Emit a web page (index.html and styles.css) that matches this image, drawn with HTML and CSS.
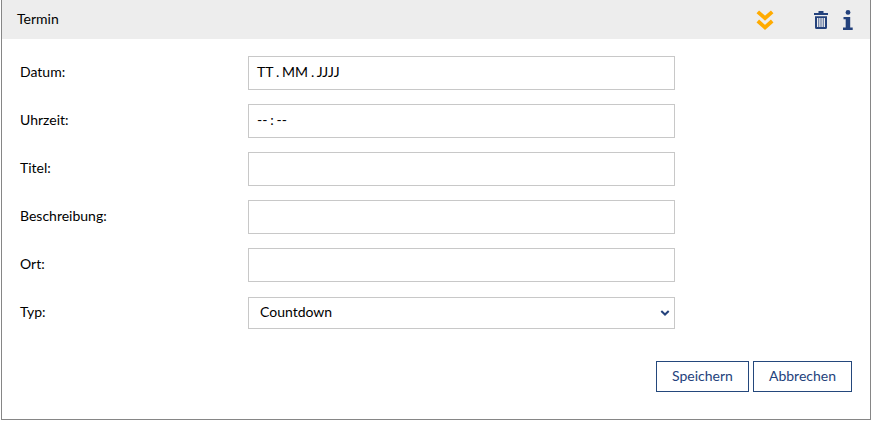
FILE: index.html
```html
<!DOCTYPE html>
<html lang="de">
<head>
<meta charset="utf-8">
<title>Termin</title>
<link rel="stylesheet" href="styles.css">
</head>
<body>
<section class="panel">
  <header class="panel-header">
    <span class="panel-title">Termin</span>
    <div class="panel-tools">
      <svg class="icon-collapse" width="18" height="20" viewBox="0 0 18 20" fill="none" stroke="#ffab00" stroke-width="3.800"><path d="M1.800 1.800 9 8.200 16.200 1.800M1.800 11 9 17.400 16.200 11"/></svg>
      <svg class="icon-trash" width="14" height="18" viewBox="0 0 14 18"><path fill="#24427c" fill-rule="evenodd" d="M0 2H4.500V0H9.500V2H14V4H0ZM1 5.200H13V16.500Q13 18 11.500 18H2.500Q1 18 1 16.500ZM3 7V16H4.400V7ZM5.200 7V16H6.600V7ZM7.400 7V16H8.800V7ZM9.600 7V16H11V7Z"/></svg>
      <svg class="icon-info" width="10" height="20" viewBox="0 0 10 20" fill="#24427c"><circle cx="5" cy="2.400" r="2.400"/><path d="M.5 7H7.200V17.600H9.700V20H0V17.600H2.700V9.300H.5Z"/></svg>
    </div>
  </header>
  <form class="form">
    <div class="row"><span class="label">Datum:</span><div class="field date">TT . MM . JJJJ</div></div>
    <div class="row"><span class="label">Uhrzeit:</span><div class="field time">-- : --</div></div>
    <div class="row"><span class="label">Titel:</span><div class="field"></div></div>
    <div class="row"><span class="label">Beschreibung:</span><div class="field"></div></div>
    <div class="row"><span class="label">Ort:</span><div class="field"></div></div>
    <div class="row"><span class="label">Typ:</span><div class="field select"><span>Countdown</span><svg width="10" height="8" viewBox="0 0 10 8" fill="none" stroke="#24427c" stroke-width="2"><path d="M1.300 2 5 5.500 8.700 2"/></svg></div></div>
    <div class="actions">
      <button class="button save" type="button">Speichern</button>
      <button class="button cancel" type="button">Abbrechen</button>
    </div>
  </form>
</section>
</body>
</html>
```
FILE: styles.css
```css
* { box-sizing: border-box; }
body {
  margin: 0;
  background: #fff;
  color: #000;
  font: 14px/20px Lato, sans-serif;
}
.panel {
  width: 870px;
  height: 420px;
  margin-left: 1px;
  border: 1px solid #868686;
  border-top: 0;
}
.panel-header {
  display: flex;
  justify-content: space-between;
  height: 39px;
  padding: 9px 17px 0 15px;
  background: #ededed;
}
.panel-tools {
  display: flex;
  align-items: flex-start;
}
.icon-collapse { margin: 1px 40px 0 0; }
.icon-trash { margin: 2px 15px 0 0; }
.icon-info { margin-top: 1px; }
.form { padding: 17px 18px 0; }
.row {
  display: flex;
  align-items: center;
  height: 34px;
  margin-bottom: 14px;
}
.label {
  width: 228px;
  padding-bottom: 2px;
}
.field {
  width: 427px;
  height: 34px;
  padding: 5px 8px;
  border: 1px solid #c8c8c8;
  background: #fff;
}
.date,
.time { word-spacing: -0.75px; }
.select {
  display: flex;
  justify-content: space-between;
  height: 32px;
  padding: 4px 4px 4px 11px;
}
.select svg { margin-top: 7px; }
.actions {
  display: flex;
  justify-content: flex-end;
  gap: 4px;
  margin-top: 31px;
}
.button {
  height: 31px;
  padding: 0 0 1px;
  border: 1px solid #24487c;
  background: #fff;
  color: #24427c;
  font: inherit;
}
.save { width: 93px; }
.cancel { width: 99px; }
```
